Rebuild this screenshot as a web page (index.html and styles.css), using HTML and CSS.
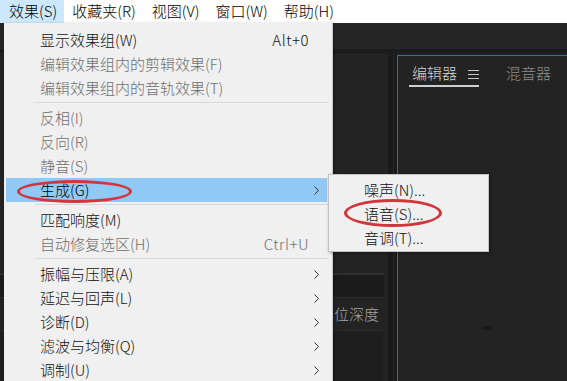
FILE: index.html
```html
<!DOCTYPE html>
<html lang="zh-CN">
<head>
<meta charset="utf-8">
<title>效果菜单</title>
<link rel="stylesheet" href="styles.css">
</head>
<body>
<div class="menubar">
  <div class="mb-item active">效果(S)</div>
  <div class="mb-item">收藏夹(R)</div>
  <div class="mb-item">视图(V)</div>
  <div class="mb-item">窗口(W)</div>
  <div class="mb-item">帮助(H)</div>
</div>

<div class="workspace">
  <div class="topband"></div>
  <div class="main">
    <div class="leftcol">
      <div class="field"></div>
      <div class="label">位深度</div>
      <div class="box"></div>
    </div>
    <div class="sep"><div class="sep-line"></div></div>
    <div class="editor">
      <div class="tabs">
        <div class="tab current">编辑器
          <svg class="hamb" width="11" height="9" viewBox="0 0 11 9"><path d="M0 0.5H11M0 4.5H11M0 8.5H11" stroke="#c8c8c8" stroke-width="1"/></svg>
        </div>
        <div class="tab other">混音器</div>
      </div>
      <div class="smudge"></div>
    </div>
  </div>
</div>

<div class="menu">
  <div class="mi"><span>显示效果组(W)</span><span class="sc">Alt+0</span><span></span></div>
  <div class="mi dis"><span>编辑效果组内的剪辑效果(F)</span><span></span><span></span></div>
  <div class="mi dis"><span>编辑效果组内的音轨效果(T)</span><span></span><span></span></div>
  <div class="msep"></div>
  <div class="mi dis"><span>反相(I)</span><span></span><span></span></div>
  <div class="mi dis"><span>反向(R)</span><span></span><span></span></div>
  <div class="mi dis"><span>静音(S)</span><span></span><span></span></div>
  <div class="mi hl"><span>生成(G)</span><span></span><span class="arr"><svg width="5" height="9" viewBox="0 0 5 9"><polyline points="0.5,0.5 4.5,4.5 0.5,8.5" fill="none" stroke="#333" stroke-width="1"/></svg></span></div>
  <div class="msep"></div>
  <div class="mi"><span>匹配响度(M)</span><span></span><span></span></div>
  <div class="mi dis"><span>自动修复选区(H)</span><span class="sc">Ctrl+U</span><span></span></div>
  <div class="msep"></div>
  <div class="mi"><span>振幅与压限(A)</span><span></span><span class="arr"><svg width="5" height="9" viewBox="0 0 5 9"><polyline points="0.5,0.5 4.5,4.5 0.5,8.5" fill="none" stroke="#333" stroke-width="1"/></svg></span></div>
  <div class="mi"><span>延迟与回声(L)</span><span></span><span class="arr"><svg width="5" height="9" viewBox="0 0 5 9"><polyline points="0.5,0.5 4.5,4.5 0.5,8.5" fill="none" stroke="#333" stroke-width="1"/></svg></span></div>
  <div class="mi"><span>诊断(D)</span><span></span><span class="arr"><svg width="5" height="9" viewBox="0 0 5 9"><polyline points="0.5,0.5 4.5,4.5 0.5,8.5" fill="none" stroke="#333" stroke-width="1"/></svg></span></div>
  <div class="mi"><span>滤波与均衡(Q)</span><span></span><span class="arr"><svg width="5" height="9" viewBox="0 0 5 9"><polyline points="0.5,0.5 4.5,4.5 0.5,8.5" fill="none" stroke="#333" stroke-width="1"/></svg></span></div>
  <div class="mi"><span>调制(U)</span><span></span><span class="arr"><svg width="5" height="9" viewBox="0 0 5 9"><polyline points="0.5,0.5 4.5,4.5 0.5,8.5" fill="none" stroke="#333" stroke-width="1"/></svg></span></div>
</div>

<div class="submenu">
  <div class="si">噪声(N)...</div>
  <div class="si">语音(S)...</div>
  <div class="si">音调(T)...</div>
</div>

<div class="ring ring-gen"></div>
<div class="ring ring-voice"></div>
</body>
</html>
```

FILE: styles.css
```css
* { box-sizing: border-box; }
html, body { margin: 0; padding: 0; }
body {
  width: 567px;
  height: 381px;
  overflow: hidden;
  position: relative;
  background: #232323;
  font-family: "Noto Sans CJK SC", "Microsoft YaHei", sans-serif;
  font-size: 15px;
  font-weight: 300;
}

/* menubar */
.menubar {
  height: 23px;
  background: #ffffff;
  display: flex;
  align-items: stretch;
}
.mb-item {
  padding: 0 8px;
  line-height: 22px;
  color: #000;
  white-space: nowrap;
}
.mb-item.active {
  background: #cce8ff;
  padding-left: 9px;
  padding-right: 7px;
}

/* dark workspace */
.workspace {
  height: 358px;
  display: flex;
  flex-direction: column;
  background: #232323;
}
.topband {
  height: 30px;
  background: #262626;
  border-bottom: 4px solid #1b1b1b;
  flex: none;
}
.main {
  flex: 1;
  display: flex;
  min-height: 0;
}
.leftcol {
  width: 388px;
  flex: none;
  display: flex;
  flex-direction: column;
  padding-right: 4px;
  background: #232323;
}
.field {
  margin-top: 220px;
  height: 25px;
  background: #1b1b1b;
  border-top: 2px solid #2e2e2e;
  border-bottom: 1px solid #2e2e2e;
}
.label {
  height: 32px;
  line-height: 32px;
  text-align: right;
  padding-right: 5px;
  color: #a6a6a6;
  font-size: 15px;
}
.box {
  flex: 1;
  background: #1e1e1e;
  border-top: 1px solid #2a2a2a;
  margin-right: 1px;
}
.sep {
  width: 9px;
  flex: none;
  background: #1a1a1a;
  display: flex;
  justify-content: center;
  padding-left: 1px;
}
.sep-line {
  width: 1px;
  background: #3a1f22;
}
.editor {
  flex: 1;
  margin-top: 2px;
  border-left: 1px solid #3d69b6;
  border-top: 1px solid #3d69b6;
  background: #232323;
  position: relative;
}
.tabs {
  display: flex;
  align-items: flex-start;
  padding: 7px 0 0 11px;
  gap: 27px;
}
.tab {
  line-height: 20px;
  padding: 0 0 2px 3px;
  display: flex;
  align-items: center;
  white-space: nowrap;
}
.tab.current {
  color: #d6d6d6;
  border-bottom: 2px solid #cfcfcf;
}
.tab.other {
  color: #8c8c8c;
  padding-left: 0;
}
.hamb {
  margin-left: 11px;
  margin-top: 2px;
}
.smudge {
  position: absolute;
  left: 84px;
  top: 270px;
  width: 10px;
  height: 4px;
  border-radius: 50%;
  background: #1a1a1a;
}

/* dropdown menu */
.menu {
  position: absolute;
  left: 4px;
  top: 23px;
  width: 329px;
  height: 372px;
  background: #f0f0f0;
  border-right: 1px solid #c9c9c9;
  box-shadow: 1px 1px 3px rgba(0,0,0,0.35);
  padding-top: 5px;
}
.mi {
  height: 24px;
  margin: 0 5px 0 2px;
  padding-left: 34px;
  display: grid;
  grid-template-columns: 1fr auto 18px;
  align-items: center;
  color: #111;
  line-height: 24px;
  white-space: nowrap;
}
.mi.dis { color: #6f6f6f; }
.mi.hl { background: #90c8f6; color: #000; }
.sc { color: inherit; letter-spacing: 0.5px; }
.arr {
  display: flex;
  align-items: center;
  padding-left: 5px;
}
.msep {
  height: 1px;
  background: #d9d9d9;
  margin: 2px 3px 3px 31px;
}

/* submenu */
.submenu {
  position: absolute;
  left: 328px;
  top: 174px;
  width: 161px;
  height: 78px;
  background: #f0f0f0;
  border: 1px solid #c2c2c2;
  box-shadow: 1px 1px 3px rgba(0,0,0,0.35);
  padding: 3px 2px 1px 2px;
}
.si {
  height: 24px;
  line-height: 24px;
  padding-left: 33px;
  color: #111;
  white-space: nowrap;
}

/* annotation rings */
.ring {
  position: absolute;
  border: 3px solid #d2353b;
  border-radius: 50%;
}
.ring-gen { left: 17px; top: 180px; width: 115px; height: 23px; }
.ring-voice { left: 344px; top: 199px; width: 98px; height: 28px; }
```
